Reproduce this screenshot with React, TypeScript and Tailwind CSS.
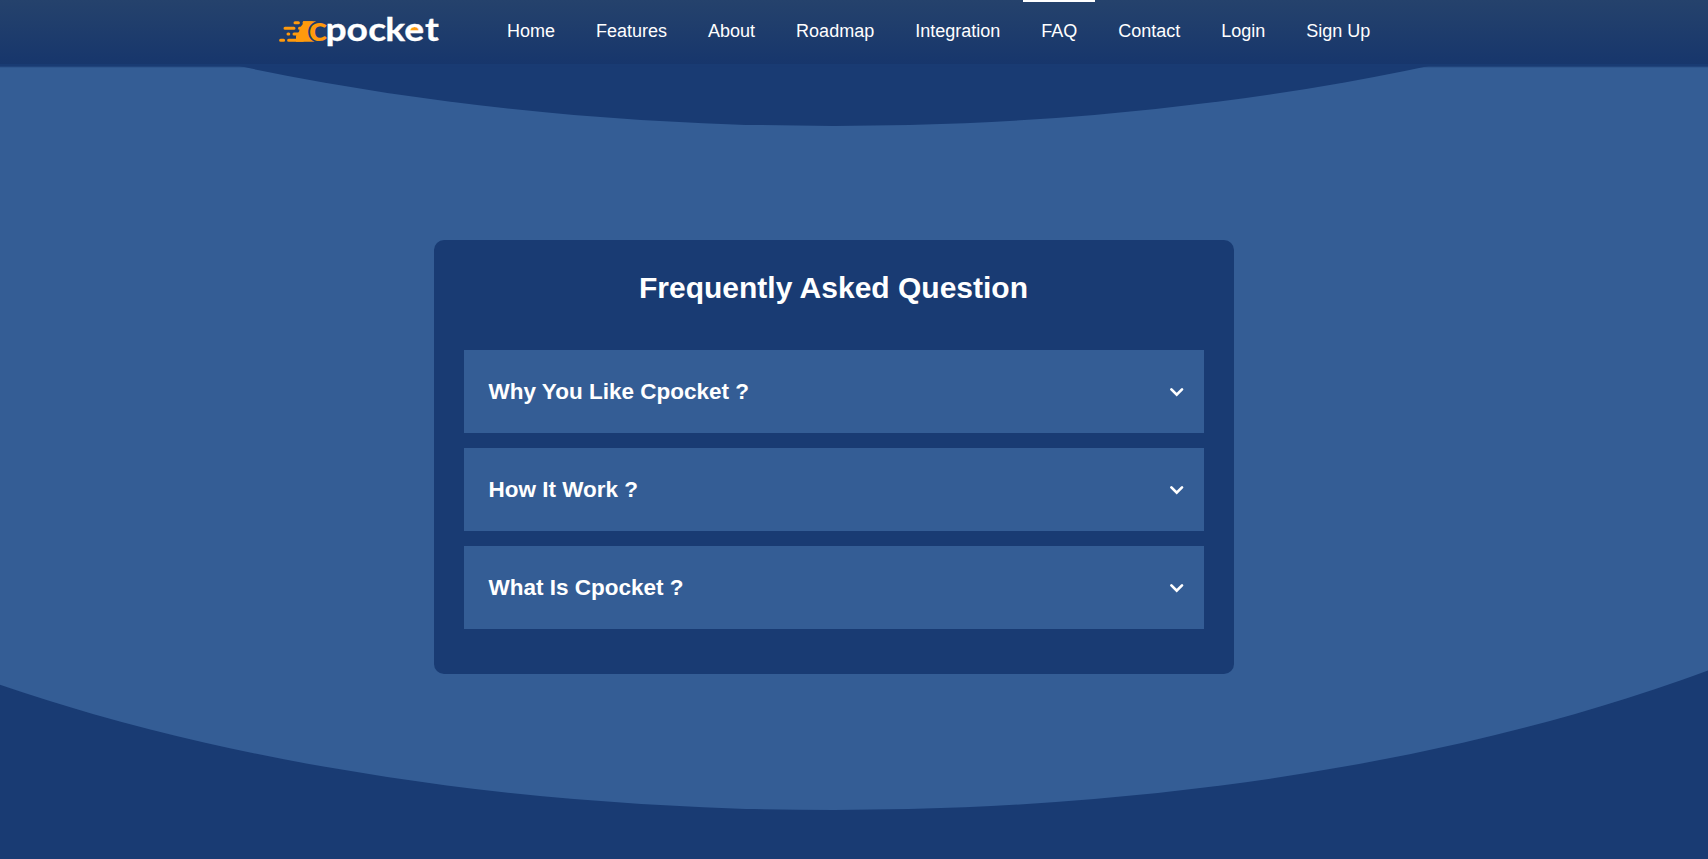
const links = ["Home", "Features", "About", "Roadmap", "Integration", "FAQ", "Contact", "Login", "Sign Up"];
const questions = ["Why You Like Cpocket ?", "How It Work ?", "What Is Cpocket ?"];

function Logo() {
  return (
    <svg width="180" height="62" viewBox="0 -14 180 62" className="block">
      <path
        d="M17 8.800h3.400M7 14.200h9M10 20h.8M2.600 26.300h3M26 8.800h8M21.500 14.200h8M16 20h8M10.600 26.300h14"
        stroke="#ff9a0c"
        strokeWidth="3"
        strokeLinecap="round"
      />
      <path d="M25 7.300h13c-6 4-7.500 14-1 20.500H18v-6l3-4 1-4 3-4z" fill="#ff9a0c" />
      <path d="M131 17c0-8 10-8 10 0z" fill="#ff9a0c" />
      <g transform="scale(1.13 1)" fontSize="33" fontWeight="700" fontFamily="Lato, sans-serif">
        <text x="27.2" y="26.600" fill="#ff9a0c" stroke="#1d3c6d" strokeWidth="3.5" paintOrder="stroke" fontSize="34">
          c
        </text>
        <text x="42.100 60.600 79.900 95 111.800 130.100" y="26.600" fill="#fff" stroke="#fff" strokeWidth=".3">
          pocket
        </text>
      </g>
    </svg>
  );
}

function Chevron() {
  return (
    <svg width="24" height="25" viewBox="0 0 24 25" fill="none">
      <path d="M7.400 10.400 12.700 15.600 18 10.400" stroke="currentColor" strokeWidth="2.7" strokeLinecap="round" />
    </svg>
  );
}

export default function App() {
  return (
    <div className="relative isolate flex h-[859px] w-full flex-col overflow-hidden bg-[#193b73] font-['Liberation_Sans',Arial,sans-serif] text-white">
      <svg className="absolute inset-0 -z-10" width="1708" height="859">
        <rect width="1708" height="200" y="66" fill="#345d95" />
        <ellipse cx="834" cy="240" rx="1334" ry="570" fill="#345d95" />
        <ellipse cx="834" cy="-444.100" rx="1334" ry="570" fill="#193b73" />
        <rect width="1708" height="66" fill="#193b73" />
        <rect y="66" width="1708" height="1" fill="#193b73" opacity=".75" />
        <rect y="67" width="1708" height="1" fill="#193b73" opacity=".2" />
      </svg>
      <header className="flex h-16 shrink-0 bg-linear-to-b from-[#25426c] to-[#17366c] pl-[278px]">
        <div className="w-[211px]">
          <Logo />
        </div>
        <nav className="flex gap-[5px] text-lg">
          {links.map((link) => (
            <a key={link} href="#" className={`h-16 border-t-2 px-[18px] pt-[15px] whitespace-nowrap ${link === "FAQ" ? "border-white" : "border-transparent"}`}>
              {link}
            </a>
          ))}
        </nav>
      </header>
      <main className="mt-[176px] ml-[434px] h-[434px] w-[800px] rounded-[10px] bg-[#193b73] px-[30px] pt-[30px]">
        <h1 className="h-20 pr-px text-center text-[30px] leading-9 font-bold">Frequently Asked Question</h1>
        <div className="flex flex-col gap-[15px]">
          {questions.map((q) => (
            <button key={q} className="flex h-[83px] items-center justify-between bg-[#345d95] pr-4 pl-[24.5px] text-[22.5px] font-bold">
              <span>{q}</span>
              <Chevron />
            </button>
          ))}
        </div>
      </main>
    </div>
  );
}
